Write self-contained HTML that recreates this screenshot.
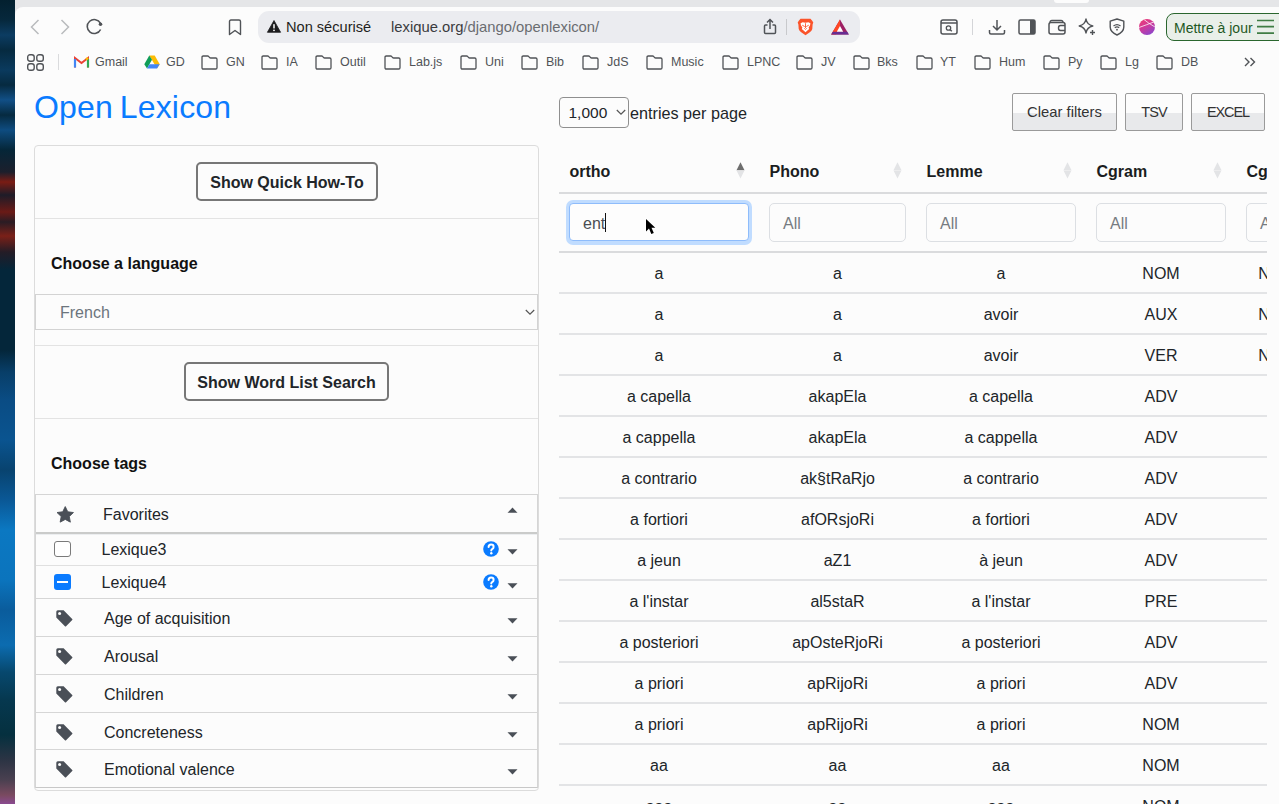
<!DOCTYPE html>
<html><head><meta charset="utf-8">
<style>
*{box-sizing:border-box;margin:0;padding:0}
html,body{width:1279px;height:804px;overflow:hidden;background:#fcfcfc;font-family:"Liberation Sans",sans-serif;color:#212529}
.a{position:absolute}
.t{position:absolute;white-space:nowrap;line-height:1.117}
#desk{left:0;top:0;width:15px;height:804px;background:linear-gradient(180deg,#03202f 0px,#06283c 20px,#0c3c62 35px,#062a40 50px,#0a3a5e 70px,#062a40 85px,#114f86 100px,#062a40 115px,#0e4c80 130px,#052638 150px,#1c1f2c 172px,#7a1c14 182px,#1e1c28 195px,#6a1a16 212px,#2a1c24 222px,#7a2018 236px,#241c26 252px,#04263a 270px,#04263a 350px,#083e68 372px,#0a4c84 400px,#0a5490 440px,#08436f 470px,#0a5896 500px,#0b78c2 530px,#0b74bd 580px,#0a5c9c 610px,#0c6cb0 645px,#07486e 672px,#06384f 700px,#05303f 735px,#2c3444 760px,#4a4050 780px,#7a4a60 795px,#8a4a90 804px)}
#strip{left:15px;top:0;width:1264px;height:20px;background:#e5e6e8}
#win{left:15px;top:7px;width:1264px;height:797px;background:#fcfcfc;border-top-left-radius:8px}
.ic{position:absolute;overflow:visible}
.bm{position:absolute;top:49px;height:26px;font-size:12.5px;color:#505357}
.bm svg{position:absolute;left:0;top:6px}
.bm span{position:absolute;top:7px;line-height:1;white-space:nowrap}
.btn{border:2px solid #777;border-radius:5px;background:#fcfcfc;font-size:16px;font-weight:bold;color:#212529;text-align:center;line-height:37px;white-space:nowrap}
.dtb{border:1px solid #9a9a9a;border-radius:2px;background:linear-gradient(180deg,#fcfcfc 0,#fcfcfc 54%,#e8e9eb 54%,#e8e9eb 100%);color:#333;text-align:center;line-height:37px;white-space:nowrap}
</style></head><body>
<div id="desk" class="a"></div>
<div id="strip" class="a"></div>
<div class="a" style="left:1054px;top:0;width:35px;height:3px;background:#fcfcfc;border-radius:0 0 4px 4px"></div>
<div id="win" class="a"></div>

<!-- toolbar -->
<svg class="ic" style="left:30px;top:19px" width="10" height="16" viewBox="0 0 10 16"><path d="M8.5 1 L1.5 8 L8.5 15" fill="none" stroke="#b9bbbe" stroke-width="1.5"/></svg>
<svg class="ic" style="left:60px;top:19px" width="10" height="16" viewBox="0 0 10 16"><path d="M1.5 1 L8.5 8 L1.5 15" fill="none" stroke="#b9bbbe" stroke-width="1.5"/></svg>
<svg class="ic" style="left:86px;top:18px" width="18" height="18" viewBox="0 0 18 18"><path d="M14.6 11.5 A7 7 0 1 1 14.4 5.2" fill="none" stroke="#505357" stroke-width="1.6"/><circle cx="14.5" cy="6.3" r="1.8" fill="#505357"/></svg>
<svg class="ic" style="left:228px;top:19px" width="14" height="17" viewBox="0 0 14 17"><path d="M1.5 2.5 Q1.5 1 3 1 H11 Q12.5 1 12.5 2.5 V15.5 L7 11.5 L1.5 15.5 Z" fill="none" stroke="#505357" stroke-width="1.4" stroke-linejoin="round"/></svg>

<div class="a" style="left:258px;top:11px;width:602px;height:32px;background:#ebecf0;border-radius:11px"></div>
<svg class="ic" style="left:267px;top:20px" width="14" height="13" viewBox="0 0 14 13"><path d="M7 0.5 L13.6 12.3 H0.4 Z" fill="#1c1c1e" stroke="#1c1c1e" stroke-width="0.8" stroke-linejoin="round"/><rect x="6.25" y="4" width="1.5" height="4.6" rx="0.7" fill="#fff"/><circle cx="7" cy="10.3" r="0.9" fill="#fff"/></svg>
<div class="t" style="left:286px;top:19px;font-size:14.6px;color:#1f1f21">Non sécurisé</div>
<div class="t" style="left:391px;top:19px;font-size:14.8px;color:#3a3b3e">lexique.org<span style="color:#6a6c70">/django/openlexicon/</span></div>
<svg class="ic" style="left:763px;top:18px" width="14" height="17" viewBox="0 0 14 17"><path d="M4.5 7 H2.5 Q1.5 7 1.5 8 V14.5 Q1.5 15.5 2.5 15.5 H11.5 Q12.5 15.5 12.5 14.5 V8 Q12.5 7 11.5 7 H9.5" fill="none" stroke="#505357" stroke-width="1.5"/><path d="M7 11 V1.5 M4 4.5 L7 1.5 L10 4.5" fill="none" stroke="#505357" stroke-width="1.5"/></svg>
<div class="a" style="left:786px;top:19px;width:1px;height:16px;background:#c8c9cc"></div>
<svg class="ic" style="left:797px;top:18px" width="17" height="18" viewBox="0 0 17 18"><path d="M3.5 0.8 H13.5 L15.2 2.8 L16.3 4.5 L15.6 6.5 L15.3 11 Q14.8 12.8 12.8 14.2 L8.5 17.3 L4.2 14.2 Q2.2 12.8 1.7 11 L1.4 6.5 L0.7 4.5 L1.8 2.8 Z" fill="#fb542b"/><path d="M3.6 5.2 L5.6 4.2 L8.5 4.8 L11.4 4.2 L13.4 5.2 L13 7.6 L11.6 9.6 L12.2 11 L10.4 12.6 L8.5 14.2 L6.6 12.6 L4.8 11 L5.4 9.6 L4 7.6 Z" fill="#fff"/><path d="M5.6 7.4 L7.4 8.4 M11.4 7.4 L9.6 8.4 M7.6 10.6 L8.5 11.4 L9.4 10.6 M8.5 5.6 V9.6" stroke="#fb542b" stroke-width="0.9" fill="none" stroke-linecap="round"/></svg>
<svg class="ic" style="left:831px;top:19px" width="18" height="16" viewBox="0 0 18 16"><path d="M9 0.5 L17.8 15.5 H0.2 Z" fill="#9e1f63"/><path d="M9 0.5 L0.2 15.5 H5 L9 7.5 Z" fill="#ff4724"/><path d="M0.2 15.5 H17.8 L16.2 12.8 H1.8 Z" fill="#662d91"/><path d="M9 7 L12.2 12.8 H5.8 Z" fill="#fff"/></svg>

<svg class="ic" style="left:940px;top:19px" width="18" height="16" viewBox="0 0 18 16"><rect x="1" y="1" width="16" height="14" rx="2" fill="none" stroke="#505357" stroke-width="1.5"/><path d="M1 4 H17" stroke="#505357" stroke-width="1.5"/><circle cx="8.5" cy="9" r="2.2" fill="none" stroke="#505357" stroke-width="1.3"/><path d="M10 10.5 L11.8 12.3" stroke="#505357" stroke-width="1.4"/></svg>
<div class="a" style="left:972px;top:19px;width:1px;height:16px;background:#d4d5d8"></div>
<svg class="ic" style="left:988px;top:19px" width="18" height="16" viewBox="0 0 18 16"><path d="M9 1 V11 M5 7 L9 11 L13 7" fill="none" stroke="#505357" stroke-width="1.5"/><path d="M1.5 11 V13.5 Q1.5 15 3 15 H15 Q16.5 15 16.5 13.5 V11" fill="none" stroke="#505357" stroke-width="1.5"/></svg>
<svg class="ic" style="left:1018px;top:19px" width="18" height="16" viewBox="0 0 18 16"><rect x="1" y="1" width="16" height="14" rx="1.5" fill="none" stroke="#505357" stroke-width="1.5"/><rect x="12" y="1" width="5" height="14" fill="#505357"/></svg>
<svg class="ic" style="left:1048px;top:19px" width="18" height="16" viewBox="0 0 18 16"><path d="M2 3.5 Q2 1.5 4 1.5 H13 Q15 1.5 15 3.5" fill="none" stroke="#505357" stroke-width="1.4"/><rect x="1" y="3.5" width="16" height="11.5" rx="2" fill="none" stroke="#505357" stroke-width="1.5"/><path d="M17 6.5 H12.5 Q10.5 6.5 10.5 9 Q10.5 11.5 12.5 11.5 H17" fill="none" stroke="#505357" stroke-width="1.4"/></svg>
<svg class="ic" style="left:1078px;top:18px" width="18" height="18" viewBox="0 0 18 18"><path d="M8 1 Q9 6.8 14.8 8 Q9 9.2 8 15 Q7 9.2 1.2 8 Q7 6.8 8 1 Z" fill="none" stroke="#505357" stroke-width="1.4" stroke-linejoin="round"/><path d="M14.5 12 V17 M12 14.5 H17" stroke="#505357" stroke-width="1.4"/></svg>
<svg class="ic" style="left:1109px;top:18px" width="16" height="18" viewBox="0 0 16 18"><path d="M8 1 L14.8 3.2 V9 Q14.8 14 8 17 Q1.2 14 1.2 9 V3.2 Z" fill="none" stroke="#505357" stroke-width="1.4" stroke-linejoin="round"/><path d="M4.5 8 Q8 5.2 11.5 8 M5.8 9.8 Q8 8 10.2 9.8" fill="none" stroke="#505357" stroke-width="1.3"/><circle cx="8" cy="11.7" r="0.9" fill="#505357"/></svg>
<div class="a" style="left:1139px;top:19px;width:16px;height:16px;border-radius:50%;background:linear-gradient(150deg,#f03c6e 0%,#d03a9a 45%,#7a48d8 100%);overflow:hidden"><svg width="16" height="16" viewBox="0 0 16 16" style="position:absolute;left:0;top:0"><path d="M0 8.5 Q7 6 16 2.5 M5 0.5 Q9 4 16 8" stroke="#fff" stroke-width="0.9" fill="none" opacity="0.85"/></svg></div>
<div class="a" style="left:1166px;top:13px;width:125px;height:28px;background:#e9efe9;border:1.6px solid #2a662e;border-radius:8px"></div>
<div class="t" style="left:1174px;top:20.5px;font-size:14px;color:#1f5824">Mettre à jour</div>
<svg class="ic" style="left:1257px;top:19px" width="17" height="16" viewBox="0 0 17 16"><path d="M0 1.5 H17 M0 7.7 H17 M0 14.1 H17" stroke="#3f7d44" stroke-width="1.7"/></svg>

<!-- bookmarks -->
<svg class="ic" style="left:27px;top:54px" width="17" height="17" viewBox="0 0 17 17"><g fill="none" stroke="#505357" stroke-width="1.4"><rect x="0.7" y="0.7" width="6.5" height="6.5" rx="2.3"/><rect x="9.8" y="0.7" width="6.5" height="6.5" rx="2.3"/><rect x="0.7" y="9.8" width="6.5" height="6.5" rx="2.3"/><rect x="9.8" y="9.8" width="6.5" height="6.5" rx="2.3"/></g></svg>
<div class="a" style="left:58px;top:54px;width:1px;height:16px;background:#dadbdd"></div>
<svg class="ic" style="left:74px;top:56px" width="15" height="12" viewBox="0 0 15 12"><path d="M1 11.5 V2 L7.5 7 L14 2 V11.5" fill="none" stroke="#ea4335" stroke-width="2"/><path d="M1 3 V11.5" stroke="#4285f4" stroke-width="2.2"/><path d="M14 3 V11.5" stroke="#34a853" stroke-width="2.2"/><path d="M12 3.5 L14 2" stroke="#fbbc04" stroke-width="2.2"/></svg>
<div class="bm" style="left:95px"><span>Gmail</span></div>
<svg class="ic" style="left:144px;top:55px" width="16" height="14" viewBox="0 0 16 14"><path d="M5.3 0.5 H10.7 L15.7 9.3 L13 13.5 Z" fill="#fbbc04"/><path d="M5.3 0.5 L0.3 9.3 L3 13.5 L8 4.8 Z" fill="#0f9d58"/><path d="M3 13.5 H13 L15.7 9.3 H5.4 Z" fill="#4285f4"/></svg>
<div class="bm" style="left:166px"><span>GD</span></div>
<svg class="ic" style="left:201px;top:55px" width="17" height="15" viewBox="0 0 17 15"><path d="M1 2.3 Q1 1 2.3 1 H6.6 Q7.3 1 7.8 1.6 L8.6 2.5 Q9 3 9.7 3 H14.7 Q16 3 16 4.3 V12.7 Q16 14 14.7 14 H2.3 Q1 14 1 12.7 Z" fill="none" stroke="#505357" stroke-width="1.3"/></svg>
<div class="bm" style="left:226px"><span>GN</span></div>
<svg class="ic" style="left:261px;top:55px" width="17" height="15" viewBox="0 0 17 15"><path d="M1 2.3 Q1 1 2.3 1 H6.6 Q7.3 1 7.8 1.6 L8.6 2.5 Q9 3 9.7 3 H14.7 Q16 3 16 4.3 V12.7 Q16 14 14.7 14 H2.3 Q1 14 1 12.7 Z" fill="none" stroke="#505357" stroke-width="1.3"/></svg>
<div class="bm" style="left:286px"><span>IA</span></div>
<svg class="ic" style="left:315px;top:55px" width="17" height="15" viewBox="0 0 17 15"><path d="M1 2.3 Q1 1 2.3 1 H6.6 Q7.3 1 7.8 1.6 L8.6 2.5 Q9 3 9.7 3 H14.7 Q16 3 16 4.3 V12.7 Q16 14 14.7 14 H2.3 Q1 14 1 12.7 Z" fill="none" stroke="#505357" stroke-width="1.3"/></svg>
<div class="bm" style="left:340px"><span>Outil</span></div>
<svg class="ic" style="left:384px;top:55px" width="17" height="15" viewBox="0 0 17 15"><path d="M1 2.3 Q1 1 2.3 1 H6.6 Q7.3 1 7.8 1.6 L8.6 2.5 Q9 3 9.7 3 H14.7 Q16 3 16 4.3 V12.7 Q16 14 14.7 14 H2.3 Q1 14 1 12.7 Z" fill="none" stroke="#505357" stroke-width="1.3"/></svg>
<div class="bm" style="left:409px"><span>Lab.js</span></div>
<svg class="ic" style="left:460px;top:55px" width="17" height="15" viewBox="0 0 17 15"><path d="M1 2.3 Q1 1 2.3 1 H6.6 Q7.3 1 7.8 1.6 L8.6 2.5 Q9 3 9.7 3 H14.7 Q16 3 16 4.3 V12.7 Q16 14 14.7 14 H2.3 Q1 14 1 12.7 Z" fill="none" stroke="#505357" stroke-width="1.3"/></svg>
<div class="bm" style="left:485px"><span>Uni</span></div>
<svg class="ic" style="left:521px;top:55px" width="17" height="15" viewBox="0 0 17 15"><path d="M1 2.3 Q1 1 2.3 1 H6.6 Q7.3 1 7.8 1.6 L8.6 2.5 Q9 3 9.7 3 H14.7 Q16 3 16 4.3 V12.7 Q16 14 14.7 14 H2.3 Q1 14 1 12.7 Z" fill="none" stroke="#505357" stroke-width="1.3"/></svg>
<div class="bm" style="left:546px"><span>Bib</span></div>
<svg class="ic" style="left:582px;top:55px" width="17" height="15" viewBox="0 0 17 15"><path d="M1 2.3 Q1 1 2.3 1 H6.6 Q7.3 1 7.8 1.6 L8.6 2.5 Q9 3 9.7 3 H14.7 Q16 3 16 4.3 V12.7 Q16 14 14.7 14 H2.3 Q1 14 1 12.7 Z" fill="none" stroke="#505357" stroke-width="1.3"/></svg>
<div class="bm" style="left:607px"><span>JdS</span></div>
<svg class="ic" style="left:646px;top:55px" width="17" height="15" viewBox="0 0 17 15"><path d="M1 2.3 Q1 1 2.3 1 H6.6 Q7.3 1 7.8 1.6 L8.6 2.5 Q9 3 9.7 3 H14.7 Q16 3 16 4.3 V12.7 Q16 14 14.7 14 H2.3 Q1 14 1 12.7 Z" fill="none" stroke="#505357" stroke-width="1.3"/></svg>
<div class="bm" style="left:671px"><span>Music</span></div>
<svg class="ic" style="left:722px;top:55px" width="17" height="15" viewBox="0 0 17 15"><path d="M1 2.3 Q1 1 2.3 1 H6.6 Q7.3 1 7.8 1.6 L8.6 2.5 Q9 3 9.7 3 H14.7 Q16 3 16 4.3 V12.7 Q16 14 14.7 14 H2.3 Q1 14 1 12.7 Z" fill="none" stroke="#505357" stroke-width="1.3"/></svg>
<div class="bm" style="left:747px"><span>LPNC</span></div>
<svg class="ic" style="left:796px;top:55px" width="17" height="15" viewBox="0 0 17 15"><path d="M1 2.3 Q1 1 2.3 1 H6.6 Q7.3 1 7.8 1.6 L8.6 2.5 Q9 3 9.7 3 H14.7 Q16 3 16 4.3 V12.7 Q16 14 14.7 14 H2.3 Q1 14 1 12.7 Z" fill="none" stroke="#505357" stroke-width="1.3"/></svg>
<div class="bm" style="left:821px"><span>JV</span></div>
<svg class="ic" style="left:853px;top:55px" width="17" height="15" viewBox="0 0 17 15"><path d="M1 2.3 Q1 1 2.3 1 H6.6 Q7.3 1 7.8 1.6 L8.6 2.5 Q9 3 9.7 3 H14.7 Q16 3 16 4.3 V12.7 Q16 14 14.7 14 H2.3 Q1 14 1 12.7 Z" fill="none" stroke="#505357" stroke-width="1.3"/></svg>
<div class="bm" style="left:877px"><span>Bks</span></div>
<svg class="ic" style="left:916px;top:55px" width="17" height="15" viewBox="0 0 17 15"><path d="M1 2.3 Q1 1 2.3 1 H6.6 Q7.3 1 7.8 1.6 L8.6 2.5 Q9 3 9.7 3 H14.7 Q16 3 16 4.3 V12.7 Q16 14 14.7 14 H2.3 Q1 14 1 12.7 Z" fill="none" stroke="#505357" stroke-width="1.3"/></svg>
<div class="bm" style="left:940px"><span>YT</span></div>
<svg class="ic" style="left:974px;top:55px" width="17" height="15" viewBox="0 0 17 15"><path d="M1 2.3 Q1 1 2.3 1 H6.6 Q7.3 1 7.8 1.6 L8.6 2.5 Q9 3 9.7 3 H14.7 Q16 3 16 4.3 V12.7 Q16 14 14.7 14 H2.3 Q1 14 1 12.7 Z" fill="none" stroke="#505357" stroke-width="1.3"/></svg>
<div class="bm" style="left:999px"><span>Hum</span></div>
<svg class="ic" style="left:1043px;top:55px" width="17" height="15" viewBox="0 0 17 15"><path d="M1 2.3 Q1 1 2.3 1 H6.6 Q7.3 1 7.8 1.6 L8.6 2.5 Q9 3 9.7 3 H14.7 Q16 3 16 4.3 V12.7 Q16 14 14.7 14 H2.3 Q1 14 1 12.7 Z" fill="none" stroke="#505357" stroke-width="1.3"/></svg>
<div class="bm" style="left:1068px"><span>Py</span></div>
<svg class="ic" style="left:1100px;top:55px" width="17" height="15" viewBox="0 0 17 15"><path d="M1 2.3 Q1 1 2.3 1 H6.6 Q7.3 1 7.8 1.6 L8.6 2.5 Q9 3 9.7 3 H14.7 Q16 3 16 4.3 V12.7 Q16 14 14.7 14 H2.3 Q1 14 1 12.7 Z" fill="none" stroke="#505357" stroke-width="1.3"/></svg>
<div class="bm" style="left:1125px"><span>Lg</span></div>
<svg class="ic" style="left:1156px;top:55px" width="17" height="15" viewBox="0 0 17 15"><path d="M1 2.3 Q1 1 2.3 1 H6.6 Q7.3 1 7.8 1.6 L8.6 2.5 Q9 3 9.7 3 H14.7 Q16 3 16 4.3 V12.7 Q16 14 14.7 14 H2.3 Q1 14 1 12.7 Z" fill="none" stroke="#505357" stroke-width="1.3"/></svg>
<div class="bm" style="left:1181px"><span>DB</span></div>
<svg class="ic" style="left:1244px;top:57px" width="12" height="10" viewBox="0 0 12 10"><path d="M1 1 L5 5 L1 9 M6.5 1 L10.5 5 L6.5 9" fill="none" stroke="#505357" stroke-width="1.4"/></svg>
<!-- left -->
<div class="t" style="left:34px;top:90px;font-size:32px;word-spacing:-2.5px;letter-spacing:0.2px;color:#0a7bff">Open Lexicon</div>
<div class="a" style="left:34px;top:145px;width:505px;height:646px;border:1px solid #dcdcdc;border-radius:4px;background:#fcfcfc"></div>
<div class="a" style="left:35px;top:218px;width:503px;height:1px;background:#e3e3e3"></div>
<div class="a" style="left:35px;top:345px;width:503px;height:1px;background:#e3e3e3"></div>
<div class="a" style="left:35px;top:418px;width:503px;height:1px;background:#e3e3e3"></div>
<div class="a btn" style="left:196px;top:162px;width:182px;height:39px">Show Quick How-To</div>
<div class="a btn" style="left:184px;top:362px;width:205px;height:39px">Show Word List Search</div>
<div class="t" style="left:51px;top:255px;font-size:16px;font-weight:bold;color:#111">Choose a language</div>
<div class="a" style="left:35px;top:294px;width:503px;height:36px;border:1px solid #d3d3d3;background:#fcfcfc"></div>
<div class="t" style="left:60px;top:304px;font-size:16px;color:#6c757d">French</div>
<svg class="ic" style="left:525px;top:309px" width="10" height="7" viewBox="0 0 10 7"><path d="M0.8 1 L5 5.2 L9.2 1" fill="none" stroke="#555" stroke-width="1.2"/></svg>
<div class="t" style="left:51px;top:455px;font-size:16px;font-weight:bold;color:#111">Choose tags</div>
<div class="a" style="left:35px;top:494px;width:503px;height:294px;border:1px solid #d5d5d5;border-bottom:1px solid #c8c8c8;background:#fcfcfc"></div>
<div class="a" style="left:36px;top:532px;width:501px;height:2px;background:#cacbca"></div><div class="a" style="left:36px;top:534px;width:501px;height:1px;background:#eceef0"></div>
<svg class="ic" style="left:55.5px;top:505.5px" width="18.5" height="17.5" viewBox="0 0 24 23"><path d="M12 0.8 L15.3 7.6 L22.8 8.6 L17.3 13.8 L18.7 21.2 L12 17.6 L5.3 21.2 L6.7 13.8 L1.2 8.6 L8.7 7.6 Z" fill="#4a4f57" stroke="#4a4f57" stroke-width="1.2" stroke-linejoin="round"/></svg>
<div class="t" style="left:103px;top:506px;font-size:16px;color:#212529">Favorites</div>
<svg class="ic" style="left:507px;top:507px" width="11" height="6" viewBox="0 0 11 6"><path d="M0.5 5.8 L5.5 0.6 L10.5 5.8 Z" fill="#4a4f57"/></svg>
<div class="a" style="left:36px;top:565px;width:501px;height:1px;background:#e0e0e0"></div>
<div class="a" style="left:54px;top:541px;width:17px;height:16px;border:1px solid #7a7a7a;border-radius:3px;background:#fff"></div>
<div class="t" style="left:101.5px;top:541px;font-size:16px;color:#212529">Lexique3</div>
<svg class="ic" style="left:483px;top:541px" width="16" height="16" viewBox="0 0 16 16"><circle cx="8" cy="8" r="7.8" fill="#0a7bff"/><path d="M5.6 6.1 Q5.6 3.6 8.1 3.6 Q10.6 3.6 10.6 5.9 Q10.6 7.3 9.2 8 Q8.3 8.5 8.3 9.3 V9.6" fill="none" stroke="#fff" stroke-width="2" stroke-linecap="round"/><circle cx="8.3" cy="12.2" r="1.2" fill="#fff"/></svg>
<svg class="ic" style="left:507px;top:549px" width="11" height="6" viewBox="0 0 11 6"><path d="M0.5 0.2 L5.5 5.6 L10.5 0.2 Z" fill="#4a4f57"/></svg>
<div class="a" style="left:36px;top:598px;width:501px;height:1px;background:#d6d6d6"></div>
<div class="a" style="left:54px;top:574px;width:17px;height:16px;border-radius:3px;background:#0a7bff"></div>
<div class="a" style="left:57px;top:581px;width:11px;height:2px;background:#fff"></div>
<div class="t" style="left:101.5px;top:574px;font-size:16px;color:#212529">Lexique4</div>
<svg class="ic" style="left:483px;top:574px" width="16" height="16" viewBox="0 0 16 16"><circle cx="8" cy="8" r="7.8" fill="#0a7bff"/><path d="M5.6 6.1 Q5.6 3.6 8.1 3.6 Q10.6 3.6 10.6 5.9 Q10.6 7.3 9.2 8 Q8.3 8.5 8.3 9.3 V9.6" fill="none" stroke="#fff" stroke-width="2" stroke-linecap="round"/><circle cx="8.3" cy="12.2" r="1.2" fill="#fff"/></svg>
<svg class="ic" style="left:507px;top:583px" width="11" height="6" viewBox="0 0 11 6"><path d="M0.5 0.2 L5.5 5.6 L10.5 0.2 Z" fill="#4a4f57"/></svg>
<svg class="ic" style="left:56px;top:610px" width="17" height="17" viewBox="0 0 17 17"><path d="M0.3 1.8 Q0.3 0.3 1.8 0.3 H7.6 L16.2 8.9 Q16.8 9.5 16.2 10.1 L10.1 16.2 Q9.5 16.8 8.9 16.2 L0.3 7.6 Z" fill="#4a4f57"/><circle cx="3.6" cy="3.6" r="1.5" fill="#fcfcfc"/></svg>
<div class="t" style="left:104px;top:610px;font-size:16px;color:#212529">Age of acquisition</div>
<svg class="ic" style="left:507px;top:618px" width="11" height="6" viewBox="0 0 11 6"><path d="M0.5 0.2 L5.5 5.6 L10.5 0.2 Z" fill="#4a4f57"/></svg>
<div class="a" style="left:36px;top:636px;width:501px;height:1px;background:#d6d6d6"></div>
<svg class="ic" style="left:56px;top:648px" width="17" height="17" viewBox="0 0 17 17"><path d="M0.3 1.8 Q0.3 0.3 1.8 0.3 H7.6 L16.2 8.9 Q16.8 9.5 16.2 10.1 L10.1 16.2 Q9.5 16.8 8.9 16.2 L0.3 7.6 Z" fill="#4a4f57"/><circle cx="3.6" cy="3.6" r="1.5" fill="#fcfcfc"/></svg>
<div class="t" style="left:104px;top:648px;font-size:16px;color:#212529">Arousal</div>
<svg class="ic" style="left:507px;top:656px" width="11" height="6" viewBox="0 0 11 6"><path d="M0.5 0.2 L5.5 5.6 L10.5 0.2 Z" fill="#4a4f57"/></svg>
<div class="a" style="left:36px;top:674px;width:501px;height:1px;background:#d6d6d6"></div>
<svg class="ic" style="left:56px;top:686px" width="17" height="17" viewBox="0 0 17 17"><path d="M0.3 1.8 Q0.3 0.3 1.8 0.3 H7.6 L16.2 8.9 Q16.8 9.5 16.2 10.1 L10.1 16.2 Q9.5 16.8 8.9 16.2 L0.3 7.6 Z" fill="#4a4f57"/><circle cx="3.6" cy="3.6" r="1.5" fill="#fcfcfc"/></svg>
<div class="t" style="left:104px;top:686px;font-size:16px;color:#212529">Children</div>
<svg class="ic" style="left:507px;top:694px" width="11" height="6" viewBox="0 0 11 6"><path d="M0.5 0.2 L5.5 5.6 L10.5 0.2 Z" fill="#4a4f57"/></svg>
<div class="a" style="left:36px;top:712px;width:501px;height:1px;background:#d6d6d6"></div>
<svg class="ic" style="left:56px;top:724px" width="17" height="17" viewBox="0 0 17 17"><path d="M0.3 1.8 Q0.3 0.3 1.8 0.3 H7.6 L16.2 8.9 Q16.8 9.5 16.2 10.1 L10.1 16.2 Q9.5 16.8 8.9 16.2 L0.3 7.6 Z" fill="#4a4f57"/><circle cx="3.6" cy="3.6" r="1.5" fill="#fcfcfc"/></svg>
<div class="t" style="left:104px;top:724px;font-size:16px;color:#212529">Concreteness</div>
<svg class="ic" style="left:507px;top:732px" width="11" height="6" viewBox="0 0 11 6"><path d="M0.5 0.2 L5.5 5.6 L10.5 0.2 Z" fill="#4a4f57"/></svg>
<div class="a" style="left:36px;top:749px;width:501px;height:1px;background:#d6d6d6"></div>
<svg class="ic" style="left:56px;top:761px" width="17" height="17" viewBox="0 0 17 17"><path d="M0.3 1.8 Q0.3 0.3 1.8 0.3 H7.6 L16.2 8.9 Q16.8 9.5 16.2 10.1 L10.1 16.2 Q9.5 16.8 8.9 16.2 L0.3 7.6 Z" fill="#4a4f57"/><circle cx="3.6" cy="3.6" r="1.5" fill="#fcfcfc"/></svg>
<div class="t" style="left:104px;top:761px;font-size:16px;color:#212529">Emotional valence</div>
<svg class="ic" style="left:507px;top:769px" width="11" height="6" viewBox="0 0 11 6"><path d="M0.5 0.2 L5.5 5.6 L10.5 0.2 Z" fill="#4a4f57"/></svg>
<!-- right -->
<div class="a" style="left:559px;top:97px;width:70px;height:31px;border:1px solid #8f8f8f;border-radius:4px;background:#fcfcfc"></div>
<div class="t" style="left:568.5px;top:104px;font-size:15.5px;color:#212529">1,000</div>
<svg class="ic" style="left:616px;top:109px" width="10" height="7" viewBox="0 0 10 7"><path d="M0.8 1 L5 5.2 L9.2 1" fill="none" stroke="#555" stroke-width="1.2"/></svg>
<div class="t" style="left:630px;top:104px;font-size:16.2px;color:#212529">entries per page</div>
<div class="a dtb" style="left:1012px;top:93px;width:105px;height:38px;font-size:14.8px">Clear filters</div>
<div class="a dtb" style="left:1125px;top:93px;width:58px;height:38px;font-size:14.5px;letter-spacing:-0.9px">TSV</div>
<div class="a dtb" style="left:1191px;top:93px;width:74px;height:38px;font-size:14.5px;letter-spacing:-1.1px">EXCEL</div>
<div class="a" style="left:559px;top:140px;width:708px;height:664px;overflow:hidden">
<div class="t" style="left:10.5px;top:23px;font-size:16px;font-weight:bold;color:#1a1d21">ortho</div>
<svg class="ic" style="left:177px;top:22px" width="9" height="17" viewBox="0 0 9 17"><path d="M4.5 0.3 L8.5 8.2 H0.5 Z" fill="#6e6e6e"/><path d="M0.5 8.6 H8.5 L4.5 16.6 Z" fill="#e3e4e6"/></svg>
<div class="t" style="left:210.5px;top:23px;font-size:16px;font-weight:bold;color:#1a1d21">Phono</div>
<svg class="ic" style="left:334px;top:22px" width="9" height="17" viewBox="0 0 9 17"><path d="M4.5 0.3 L8.5 8.2 H0.5 Z" fill="#e3e4e6"/><path d="M0.5 8.6 H8.5 L4.5 16.6 Z" fill="#e3e4e6"/></svg>
<div class="t" style="left:367.5px;top:23px;font-size:16px;font-weight:bold;color:#1a1d21">Lemme</div>
<svg class="ic" style="left:504px;top:22px" width="9" height="17" viewBox="0 0 9 17"><path d="M4.5 0.3 L8.5 8.2 H0.5 Z" fill="#e3e4e6"/><path d="M0.5 8.6 H8.5 L4.5 16.6 Z" fill="#e3e4e6"/></svg>
<div class="t" style="left:537.5px;top:23px;font-size:16px;font-weight:bold;color:#1a1d21">Cgram</div>
<svg class="ic" style="left:654px;top:22px" width="9" height="17" viewBox="0 0 9 17"><path d="M4.5 0.3 L8.5 8.2 H0.5 Z" fill="#e3e4e6"/><path d="M0.5 8.6 H8.5 L4.5 16.6 Z" fill="#e3e4e6"/></svg>
<div class="t" style="left:687.5px;top:23px;font-size:16px;font-weight:bold;color:#1a1d21">Cgram2</div>
<div class="a" style="left:0px;top:52px;width:708px;height:2px;background:#dadbdd"></div>
<div class="a" style="left:7px;top:60px;width:186px;height:45px;border-radius:7px;background:#c0dcff"></div>
<div class="a" style="left:10px;top:63px;width:180px;height:38px;border:1px solid #8ebcfb;border-radius:4px;background:#fdfdfd"></div>
<div class="t" style="left:24px;top:75px;font-size:16px;color:#4a4d52">ent</div>
<div class="a" style="left:46px;top:73px;width:1px;height:19px;background:#111"></div>
<div class="a" style="left:210px;top:63px;width:137px;height:39px;border:1px solid #dcdfe3;border-radius:5px;background:#fcfcfc"></div>
<div class="t" style="left:224px;top:75px;font-size:16px;color:#767b81">All</div>
<div class="a" style="left:367px;top:63px;width:150px;height:39px;border:1px solid #dcdfe3;border-radius:5px;background:#fcfcfc"></div>
<div class="t" style="left:381px;top:75px;font-size:16px;color:#767b81">All</div>
<div class="a" style="left:537px;top:63px;width:130px;height:39px;border:1px solid #dcdfe3;border-radius:5px;background:#fcfcfc"></div>
<div class="t" style="left:551px;top:75px;font-size:16px;color:#767b81">All</div>
<div class="a" style="left:687px;top:63px;width:154px;height:39px;border:1px solid #dcdfe3;border-radius:5px;background:#fcfcfc"></div>
<div class="t" style="left:701px;top:75px;font-size:16px;color:#767b81">All</div>
<div class="a" style="left:0px;top:111px;width:708px;height:2px;background:#dadbdd"></div>
<div class="t" style="left:0px;top:125px;width:200px;text-align:center;font-size:16px;color:#212529">a</div>
<div class="t" style="left:200px;top:125px;width:157px;text-align:center;font-size:16px;color:#212529">a</div>
<div class="t" style="left:357px;top:125px;width:170px;text-align:center;font-size:16px;color:#212529">a</div>
<div class="t" style="left:527px;top:125px;width:150px;text-align:center;font-size:16px;color:#212529">NOM</div>
<div class="t" style="left:677px;top:125px;width:82px;text-align:center;font-size:16px;color:#212529">NOM</div>
<div class="a" style="left:0px;top:152px;width:708px;height:2px;background:#e3e4e6"></div>
<div class="t" style="left:0px;top:166px;width:200px;text-align:center;font-size:16px;color:#212529">a</div>
<div class="t" style="left:200px;top:166px;width:157px;text-align:center;font-size:16px;color:#212529">a</div>
<div class="t" style="left:357px;top:166px;width:170px;text-align:center;font-size:16px;color:#212529">avoir</div>
<div class="t" style="left:527px;top:166px;width:150px;text-align:center;font-size:16px;color:#212529">AUX</div>
<div class="t" style="left:677px;top:166px;width:82px;text-align:center;font-size:16px;color:#212529">NOM</div>
<div class="a" style="left:0px;top:193px;width:708px;height:2px;background:#e3e4e6"></div>
<div class="t" style="left:0px;top:207px;width:200px;text-align:center;font-size:16px;color:#212529">a</div>
<div class="t" style="left:200px;top:207px;width:157px;text-align:center;font-size:16px;color:#212529">a</div>
<div class="t" style="left:357px;top:207px;width:170px;text-align:center;font-size:16px;color:#212529">avoir</div>
<div class="t" style="left:527px;top:207px;width:150px;text-align:center;font-size:16px;color:#212529">VER</div>
<div class="t" style="left:677px;top:207px;width:82px;text-align:center;font-size:16px;color:#212529">NOM</div>
<div class="a" style="left:0px;top:234px;width:708px;height:2px;background:#e3e4e6"></div>
<div class="t" style="left:0px;top:248px;width:200px;text-align:center;font-size:16px;color:#212529">a capella</div>
<div class="t" style="left:200px;top:248px;width:157px;text-align:center;font-size:16px;color:#212529">akapEla</div>
<div class="t" style="left:357px;top:248px;width:170px;text-align:center;font-size:16px;color:#212529">a capella</div>
<div class="t" style="left:527px;top:248px;width:150px;text-align:center;font-size:16px;color:#212529">ADV</div>
<div class="a" style="left:0px;top:275px;width:708px;height:2px;background:#e3e4e6"></div>
<div class="t" style="left:0px;top:289px;width:200px;text-align:center;font-size:16px;color:#212529">a cappella</div>
<div class="t" style="left:200px;top:289px;width:157px;text-align:center;font-size:16px;color:#212529">akapEla</div>
<div class="t" style="left:357px;top:289px;width:170px;text-align:center;font-size:16px;color:#212529">a cappella</div>
<div class="t" style="left:527px;top:289px;width:150px;text-align:center;font-size:16px;color:#212529">ADV</div>
<div class="a" style="left:0px;top:316px;width:708px;height:2px;background:#e3e4e6"></div>
<div class="t" style="left:0px;top:330px;width:200px;text-align:center;font-size:16px;color:#212529">a contrario</div>
<div class="t" style="left:200px;top:330px;width:157px;text-align:center;font-size:16px;color:#212529">ak§tRaRjo</div>
<div class="t" style="left:357px;top:330px;width:170px;text-align:center;font-size:16px;color:#212529">a contrario</div>
<div class="t" style="left:527px;top:330px;width:150px;text-align:center;font-size:16px;color:#212529">ADV</div>
<div class="a" style="left:0px;top:357px;width:708px;height:2px;background:#e3e4e6"></div>
<div class="t" style="left:0px;top:371px;width:200px;text-align:center;font-size:16px;color:#212529">a fortiori</div>
<div class="t" style="left:200px;top:371px;width:157px;text-align:center;font-size:16px;color:#212529">afORsjoRi</div>
<div class="t" style="left:357px;top:371px;width:170px;text-align:center;font-size:16px;color:#212529">a fortiori</div>
<div class="t" style="left:527px;top:371px;width:150px;text-align:center;font-size:16px;color:#212529">ADV</div>
<div class="a" style="left:0px;top:398px;width:708px;height:2px;background:#e3e4e6"></div>
<div class="t" style="left:0px;top:412px;width:200px;text-align:center;font-size:16px;color:#212529">a jeun</div>
<div class="t" style="left:200px;top:412px;width:157px;text-align:center;font-size:16px;color:#212529">aZ1</div>
<div class="t" style="left:357px;top:412px;width:170px;text-align:center;font-size:16px;color:#212529">à jeun</div>
<div class="t" style="left:527px;top:412px;width:150px;text-align:center;font-size:16px;color:#212529">ADV</div>
<div class="a" style="left:0px;top:439px;width:708px;height:2px;background:#e3e4e6"></div>
<div class="t" style="left:0px;top:453px;width:200px;text-align:center;font-size:16px;color:#212529">a l'instar</div>
<div class="t" style="left:200px;top:453px;width:157px;text-align:center;font-size:16px;color:#212529">al5staR</div>
<div class="t" style="left:357px;top:453px;width:170px;text-align:center;font-size:16px;color:#212529">a l'instar</div>
<div class="t" style="left:527px;top:453px;width:150px;text-align:center;font-size:16px;color:#212529">PRE</div>
<div class="a" style="left:0px;top:480px;width:708px;height:2px;background:#e3e4e6"></div>
<div class="t" style="left:0px;top:494px;width:200px;text-align:center;font-size:16px;color:#212529">a posteriori</div>
<div class="t" style="left:200px;top:494px;width:157px;text-align:center;font-size:16px;color:#212529">apOsteRjoRi</div>
<div class="t" style="left:357px;top:494px;width:170px;text-align:center;font-size:16px;color:#212529">a posteriori</div>
<div class="t" style="left:527px;top:494px;width:150px;text-align:center;font-size:16px;color:#212529">ADV</div>
<div class="a" style="left:0px;top:521px;width:708px;height:2px;background:#e3e4e6"></div>
<div class="t" style="left:0px;top:535px;width:200px;text-align:center;font-size:16px;color:#212529">a priori</div>
<div class="t" style="left:200px;top:535px;width:157px;text-align:center;font-size:16px;color:#212529">apRijoRi</div>
<div class="t" style="left:357px;top:535px;width:170px;text-align:center;font-size:16px;color:#212529">a priori</div>
<div class="t" style="left:527px;top:535px;width:150px;text-align:center;font-size:16px;color:#212529">ADV</div>
<div class="a" style="left:0px;top:562px;width:708px;height:2px;background:#e3e4e6"></div>
<div class="t" style="left:0px;top:576px;width:200px;text-align:center;font-size:16px;color:#212529">a priori</div>
<div class="t" style="left:200px;top:576px;width:157px;text-align:center;font-size:16px;color:#212529">apRijoRi</div>
<div class="t" style="left:357px;top:576px;width:170px;text-align:center;font-size:16px;color:#212529">a priori</div>
<div class="t" style="left:527px;top:576px;width:150px;text-align:center;font-size:16px;color:#212529">NOM</div>
<div class="a" style="left:0px;top:603px;width:708px;height:2px;background:#e3e4e6"></div>
<div class="t" style="left:0px;top:617px;width:200px;text-align:center;font-size:16px;color:#212529">aa</div>
<div class="t" style="left:200px;top:617px;width:157px;text-align:center;font-size:16px;color:#212529">aa</div>
<div class="t" style="left:357px;top:617px;width:170px;text-align:center;font-size:16px;color:#212529">aa</div>
<div class="t" style="left:527px;top:617px;width:150px;text-align:center;font-size:16px;color:#212529">NOM</div>
<div class="a" style="left:0px;top:644px;width:708px;height:2px;background:#e3e4e6"></div>
<div class="t" style="left:0px;top:658px;width:200px;text-align:center;font-size:16px;color:#212529">aaa</div>
<div class="t" style="left:200px;top:658px;width:157px;text-align:center;font-size:16px;color:#212529">aa</div>
<div class="t" style="left:357px;top:658px;width:170px;text-align:center;font-size:16px;color:#212529">aaa</div>
<div class="t" style="left:527px;top:658px;width:150px;text-align:center;font-size:16px;color:#212529">NOM</div>
<div class="a" style="left:0px;top:685px;width:708px;height:2px;background:#e3e4e6"></div>
</div>
<svg class="ic" style="left:640px;top:215px" width="20" height="24" viewBox="0 0 20 24"><path d="M6 4 V16.4 L9 13.6 L11.3 18.9 L13.8 17.9 L11.5 12.7 H15.3 Z" fill="#fff" stroke="#fff" stroke-width="2.4" stroke-linejoin="round"/><path d="M6 4 V16.4 L9 13.6 L11.3 18.9 L13.8 17.9 L11.5 12.7 H15.3 Z" fill="#000"/></svg>
</body></html>
